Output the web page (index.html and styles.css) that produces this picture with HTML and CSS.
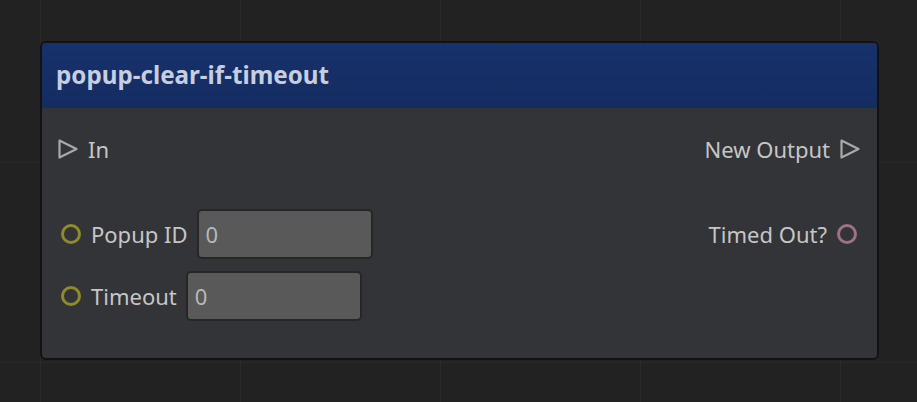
FILE: index.html
```html
<!DOCTYPE html>
<html>
<head>
<meta charset="utf-8">
<link rel="stylesheet" href="styles.css">
</head>
<body>
<div class="canvas">
  <div class="node">
    <div class="node-header">popup-clear-if-timeout</div>
    <div class="node-body">
      <div class="port port-left row-flow">
        <svg class="tri" width="20" height="20" viewBox="0 0 20 20"><path d="M1.5 1.5 L18.5 10 L1.5 18.5 Z" fill="none" stroke="#a9a9a9" stroke-width="2.2" stroke-linejoin="round"/></svg>
        <span class="label">In</span>
      </div>
      <div class="port port-right row-flow">
        <span class="label">New Output</span>
        <svg class="tri" width="20" height="20" viewBox="0 0 20 20"><path d="M1.5 1.5 L18.5 10 L1.5 18.5 Z" fill="none" stroke="#a9a9a9" stroke-width="2.2" stroke-linejoin="round"/></svg>
      </div>
      <div class="port port-left row-data">
        <span class="dot dot-yellow"></span>
        <span class="label">Popup ID</span>
        <div class="field">0</div>
      </div>
      <div class="port port-right row-data">
        <span class="label">Timed Out?</span>
        <span class="dot dot-pink"></span>
      </div>
      <div class="port port-left row-data">
        <span class="dot dot-yellow"></span>
        <span class="label">Timeout</span>
        <div class="field">0</div>
      </div>
      <div class="row-data"></div>
    </div>
  </div>
</div>
</body>
</html>
```
FILE: styles.css
```css
html, body {
  margin: 0;
  padding: 0;
}
body {
  width: 917px;
  height: 402px;
  overflow: hidden;
  background-color: #222222;
  background-image:
    linear-gradient(to right, #292929 1px, transparent 1px),
    linear-gradient(to bottom, #292929 1px, transparent 1px);
  background-size: 200px 200px;
  background-position: 40px 162px;
  font-family: "Noto Sans", "Open Sans", sans-serif;
}
.canvas {
  position: relative;
  width: 917px;
  height: 402px;
}
.node {
  position: absolute;
  left: 40px;
  top: 41px;
  width: 839px;
  height: 319px;
  box-sizing: border-box;
  border: 2px solid #121212;
  border-radius: 6px;
  background: #333437;
  overflow: hidden;
}
.node-header {
  height: 65px;
  box-sizing: border-box;
  padding-left: 14px;
  background: linear-gradient(to bottom, #17316c, #142c60);
  color: #c6cedf;
  font-weight: bold;
  font-size: 24.2px;
  line-height: 63px;
}
.node-body {
  display: grid;
  grid-template-columns: 1fr 1fr;
  grid-template-rows: auto auto auto;
  row-gap: 12px;
  padding-top: 16px;
}
.port {
  height: 50px;
  display: flex;
  align-items: center;
  gap: 10px;
  color: #c6c6c6;
  font-size: 22px;
}
.row-flow {
  margin-bottom: 23px;
}
.row-data {
  height: 50px;
}
.port-left {
  padding-left: 16px;
}
.port-right {
  justify-content: flex-end;
  padding-right: 17px;
}
.row-data.port-left {
  padding-left: 19px;
}
.row-data.port-right {
  padding-right: 20px;
}
.tri {
  display: block;
  flex: none;
}
.dot {
  width: 20px;
  height: 20px;
  box-sizing: border-box;
  border-radius: 50%;
  border: 3px solid #8f8b2b;
  flex: none;
}
.dot-yellow {
  border-color: #8f8b2b;
}
.dot-pink {
  border-color: #9d7283;
}
.field {
  width: 176px;
  height: 50px;
  box-sizing: border-box;
  margin-left: -1px;
  border: 2px solid #262626;
  border-radius: 5px;
  background: #595959;
  color: #b8b8b8;
  font-size: 22px;
  line-height: 46px;
  padding-left: 7px;
}
```
